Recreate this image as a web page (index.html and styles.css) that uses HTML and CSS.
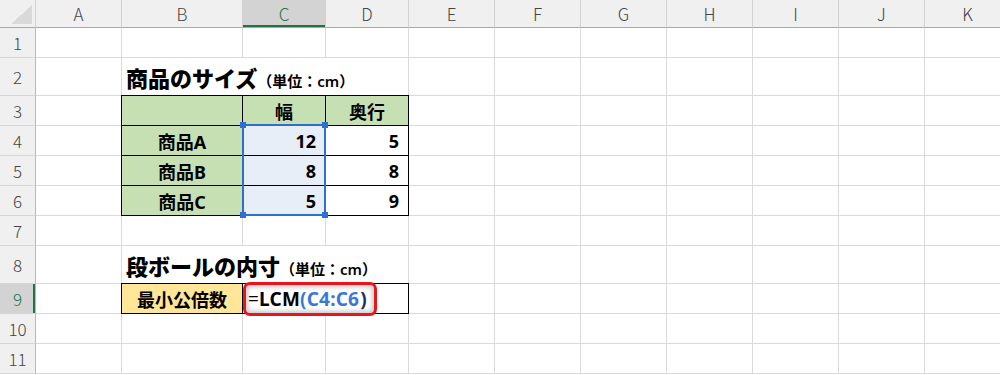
FILE: index.html
```html
<!doctype html>
<html>
  <head>
    <title>商品のサイズ</title>
    <meta charset="utf-8"/>
    <link rel="stylesheet" href="styles.css">
  </head>
  <body>
    <div class="sheet">
      <div class="row hdr">
        <span class="corner"></span><span>A</span><span>B</span><span class="on">C</span><span>D</span><span>E</span><span>F</span><span>G</span><span>H</span><span>I</span><span>J</span><span>K</span>
      </div>
      <div class="row">
        <span class="rh">1</span><span></span><span></span><span></span><span></span><span></span><span></span><span></span><span></span><span></span><span></span><span></span>
      </div>
      <div class="row tall">
        <span class="rh">2</span><span></span>
        <span class="title"><b>商品のサイズ<small>（単位：cm）</small></b></span>
        <span></span><span></span><span></span><span></span><span></span><span></span><span></span>
      </div>
      <div class="row">
        <span class="rh">3</span><span></span>
        <span class="t g ttl"></span><span class="t g tt mid">幅</span><span class="t g tt mid">奥行</span>
        <span></span><span></span><span></span><span></span><span></span><span></span><span></span>
      </div>
      <div class="row">
        <span class="rh">4</span><span></span>
        <span class="t g tl mid">商品A</span>
        <span class="t s num anchor">12
          <i class="sel"><i class="hd h1"></i><i class="hd h2"></i><i class="hd h3"></i><i class="hd h4"></i></i>
        </span>
        <span class="t num">5</span>
        <span></span><span></span><span></span><span></span><span></span><span></span><span></span>
      </div>
      <div class="row">
        <span class="rh">5</span><span></span>
        <span class="t g tl mid">商品B</span><span class="t s num">8</span><span class="t num">8</span>
        <span></span><span></span><span></span><span></span><span></span><span></span><span></span>
      </div>
      <div class="row">
        <span class="rh">6</span><span></span>
        <span class="t g tl mid">商品C</span><span class="t s num">5</span><span class="t num">9</span>
        <span></span><span></span><span></span><span></span><span></span><span></span><span></span>
      </div>
      <div class="row">
        <span class="rh">7</span><span></span><span></span><span></span><span></span><span></span><span></span><span></span><span></span><span></span><span></span><span></span>
      </div>
      <div class="row tall">
        <span class="rh">8</span><span></span>
        <span class="title"><b>段ボールの内寸<small>（単位：cm）</small></b></span>
        <span></span><span></span><span></span><span></span><span></span><span></span><span></span>
      </div>
      <div class="row">
        <span class="rh on">9</span><span></span>
        <span class="t y ttl mid">最小公倍数</span>
        <span class="t tt wide anchor">
          <i class="formula"><u>=</u>LCM<em>(C4:C6</em><s>)</s></i>
        </span>
        <span></span><span></span><span></span><span></span><span></span><span></span><span></span>
      </div>
      <div class="row">
        <span class="rh">10</span><span></span><span></span><span></span><span></span><span></span><span></span><span></span><span></span><span></span><span></span><span></span>
      </div>
      <div class="row">
        <span class="rh">11</span><span></span><span></span><span></span><span></span><span></span><span></span><span></span><span></span><span></span><span></span><span></span>
      </div>
    </div>
  </body>
</html>
```

FILE: styles.css
```css
*{
  box-sizing:border-box;
}
html,body{
  margin:0;
  padding:0;
  background:#fff;
  overflow:hidden;
}
body{
  font-family:"Noto Sans","Noto Sans CJK JP",sans-serif;
  color:#000;
}
.sheet{
  width:1011px;
}
.row{
  display:grid;
  grid-template-columns:36px 86px 121px 83px 83px repeat(7,86px);
  height:30px;
}
.row.tall{
  height:38px;
}
.row>span{
  display:flex;
  align-items:center;
  border-right:1px solid #dadada;
  border-bottom:1px solid #dadada;
  font-size:18px;
  font-weight:700;
  white-space:nowrap;
}

/* column letters and row numbers */
.row.hdr{
  height:28px;
}
.hdr>span,.row>.rh{
  justify-content:center;
  background:#f0f0f0;
  color:#444;
  font-family:"Noto Sans CJK JP",sans-serif;
  font-size:17px;
  font-weight:300;
}
.hdr>span{
  border-right-color:#d2d2d2;
  border-bottom-color:#a9a9a9;
}
.row>.rh{
  border-right-color:#b8b8b8;
  border-bottom-color:#d6d6d6;
}
.hdr>.on{
  background:#d3d3d3;
  color:#217346;
  box-shadow:inset 0 -2px 0 #217346;
}
.row>.rh.on{
  background:#d3d3d3;
  color:#217346;
  box-shadow:inset -2px 0 0 #217346;
}
.hdr>.corner{
  background:#f0f0f0 linear-gradient(to top left,#d9d9d9 50%,transparent 50%) no-repeat right 3px bottom 3px/21px 19px;
}

/* headings above each table */
.row>.title{
  grid-column:span 3;
  padding-left:4px;
  padding-top:1px;
  font-size:22px;
}
.title small{
  font-size:15px;
  font-weight:600;
}

/* bordered table cells */
.row>.t{
  border-right-color:#000;
  border-bottom-color:#000;
}
.row>.tt{
  box-shadow:0 -1px 0 #000;
}
.row>.tl{
  box-shadow:-1px 0 0 #000;
}
.row>.ttl{
  box-shadow:-1px 0 0 #000,0 -1px 0 #000,-1px -1px 0 #000;
}
.g{
  background:#c6e0b4;
}
.y{
  background:#ffe699;
}
.s{
  background:#e8eef8;
}
.mid{
  justify-content:center;
}
.num{
  justify-content:flex-end;
  padding-right:9px;
}
.row>.wide{
  grid-column:span 2;
}
.anchor{
  position:relative;
}

/* reference range frame */
.sel{
  position:absolute;
  left:-1px;
  top:-2px;
  width:84px;
  height:92px;
  border:2px solid #2e6fd2;
}
.hd{
  position:absolute;
  width:6px;
  height:6px;
  background:#2e6fd2;
}
.h1{left:-4px;top:-4px;}
.h2{right:-4px;top:-4px;}
.h3{left:-4px;bottom:-4px;}
.h4{right:-4px;bottom:-4px;}

/* formula being edited */
.formula{
  position:absolute;
  left:0;
  top:-2px;
  width:134px;
  height:34px;
  display:flex;
  align-items:center;
  padding-left:2px;
  font-size:19px;
  font-style:normal;
  letter-spacing:.2px;
  background:#fff;
  border:3px solid #e8151d;
  border-radius:7px;
  box-shadow:inset 0 0 4px 2px rgba(0,0,0,.22);
}
.formula u{
  text-decoration:none;
  font-weight:400;
}
.formula em{
  font-style:normal;
  color:#3a78d8;
}
.formula s{
  text-decoration:none;
  color:#1d2f63;
  padding-left:1px;
}
```
